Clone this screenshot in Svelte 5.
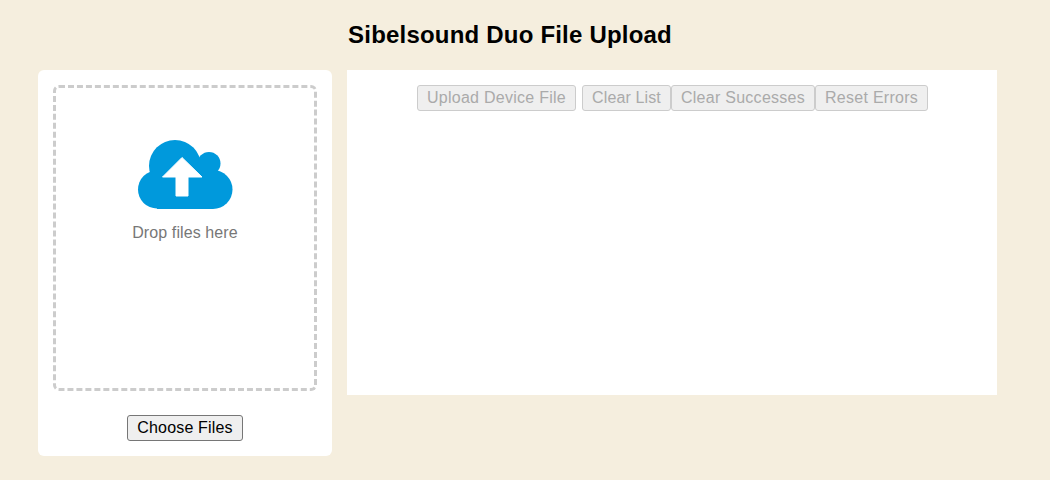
<script>
  const actions = [
    { label: 'Upload Device File', cls: 'first' },
    { label: 'Clear List', cls: 'tight' },
    { label: 'Clear Successes', cls: '' },
    { label: 'Reset Errors', cls: '' }
  ];
</script>

<div class="page">
  <h1>Sibelsound Duo File Upload</h1>
  <main>
    <section class="card">
      <div class="drop">
        <svg class="cloud" width="96" height="70" viewBox="0 0 96 70" aria-hidden="true">
          <g fill="#0099dc">
            <circle cx="38" cy="26" r="26" />
            <circle cx="72" cy="23.500" r="11.500" />
            <circle cx="20" cy="49.500" r="19" />
            <circle cx="76" cy="49.500" r="19.500" />
            <rect x="20" y="30" width="56" height="39" />
          </g>
          <path d="M45 17.500 L65 37 L51 37 L51 56 L39 56 L39 37 L25.500 37 Z" fill="#fff" stroke="#fff" stroke-width="1" stroke-linejoin="round" />
        </svg>
        <p>Drop files here</p>
      </div>
      <button class="choose" type="button">Choose Files</button>
    </section>
    <section class="panel">
      <div class="actions">
        {#each actions as a}
          <button type="button" class={a.cls} disabled>{a.label}</button>
        {/each}
      </div>
    </section>
  </main>
</div>

<style>
  :global(body) {
    background: #f5eede;
    font-family: "Liberation Sans", Arial, sans-serif;
  }
  .page {
    height: 480px;
    box-sizing: border-box;
    padding: 20px 0 0 38px;
    overflow: hidden;
  }
  h1 {
    margin: 0 0 20px;
    width: 944px;
    text-align: center;
    font-size: 24px;
    line-height: 30px;
    font-weight: 700;
    letter-spacing: 0.2px;
    color: #000;
  }
  main {
    display: flex;
    align-items: flex-start;
    gap: 15px;
  }
  .card {
    width: 294px;
    height: 386px;
    box-sizing: border-box;
    padding: 15px;
    background: #fff;
    border-radius: 6px;
    display: flex;
    flex-direction: column;
    align-items: center;
  }
  .drop {
    width: 264px;
    height: 306px;
    box-sizing: border-box;
    border: 3px dashed #ccc;
    border-radius: 6px;
    display: flex;
    flex-direction: column;
    align-items: center;
    padding-top: 52px;
  }
  .cloud {
    display: block;
  }
  .drop p {
    margin: 13px 0 0;
    font-size: 16px;
    line-height: 20px;
    letter-spacing: 0.1px;
    color: #777;
  }
  button {
    font-family: "Liberation Sans", Arial, sans-serif;
    font-size: 16px;
    line-height: 18px;
    height: 26px;
    box-sizing: border-box;
    padding: 3px 9px;
    background: #efefef;
    border-radius: 3px;
  }
  .choose {
    margin-top: 24px;
    color: #000;
    border: 1px solid #767676;
    letter-spacing: 0.17px;
  }
  .panel {
    width: 650px;
    height: 325px;
    background: #fff;
  }
  .actions {
    display: flex;
    justify-content: center;
    padding: 15px 0 0 1px;
  }
  .actions button {
    color: #aaa;
    border: 1px solid #ccc;
    letter-spacing: 0.27px;
  }
  .actions .tight {
    letter-spacing: 0.13px;
  }
  .actions .first {
    margin-right: 6px;
  }
</style>
